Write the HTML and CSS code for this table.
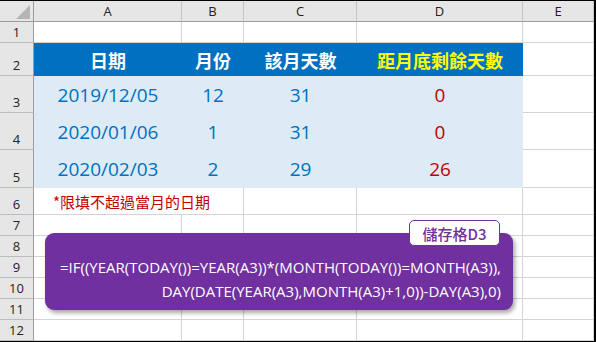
FILE: index.html
```html
<!DOCTYPE html>
<html lang="zh-Hant">
<head>
<meta charset="utf-8">
<title>距月底剩餘天數</title>
<link rel="stylesheet" href="styles.css">
</head>
<body>
<div class="sheet">
  <div class="corner"><span class="tri"></span></div>
  <div class="ch">A</div><div class="ch">B</div><div class="ch">C</div><div class="ch">D</div><div class="ch">E</div>

  <div class="rh">1</div><div class="c"></div><div class="c"></div><div class="c"></div><div class="c"></div><div class="c"></div>

  <div class="tbl">
    <div class="th">日期</div><div class="th">月份</div><div class="th">該月天數</div><div class="th th-y">距月底剩餘天數</div>
    <div class="td">2019/12/05</div><div class="td">12</div><div class="td">31</div><div class="td td-r">0</div>
    <div class="td">2020/01/06</div><div class="td">1</div><div class="td">31</div><div class="td td-r">0</div>
    <div class="td">2020/02/03</div><div class="td">2</div><div class="td">29</div><div class="td td-r">26</div>
  </div>

  <div class="rh">2</div><div class="c"></div>
  <div class="rh">3</div><div class="c"></div>
  <div class="rh">4</div><div class="c"></div>
  <div class="rh">5</div><div class="c"></div>

  <div class="rh">6</div><div class="c note">*限填不超過當月的日期</div><div class="c"></div><div class="c"></div><div class="c"></div>

  <div class="rh">7</div><div class="c"></div><div class="c"></div><div class="c"></div><div class="c"></div><div class="c"></div>
  <div class="rh">8</div><div class="c"></div><div class="c"></div><div class="c"></div><div class="c"></div><div class="c"></div>
  <div class="rh">9</div><div class="c"></div><div class="c"></div><div class="c"></div><div class="c"></div><div class="c"></div>
  <div class="rh">10</div><div class="c"></div><div class="c"></div><div class="c"></div><div class="c"></div><div class="c"></div>
  <div class="rh">11</div><div class="c"></div><div class="c"></div><div class="c"></div><div class="c"></div><div class="c"></div>
  <div class="rh">12</div><div class="c"></div><div class="c"></div><div class="c"></div><div class="c"></div><div class="c"></div>

  <div class="formula">
    <div>=IF((YEAR(TODAY())=YEAR(A3))*(MONTH(TODAY())=MONTH(A3)),</div>
    <div>DAY(DATE(YEAR(A3),MONTH(A3)+1,0))-DAY(A3),0)</div>
  </div>
  <div class="badge">儲存格D3</div>
</div>
</body>
</html>
```

FILE: styles.css
```css
* { box-sizing: border-box; }
html, body { margin: 0; padding: 0; background: #ffffff; }

.sheet {
  position: relative;
  width: 596px;
  height: 342px;
  border-top: 1px solid #000;
  border-right: 2px solid #000;
  border-bottom: 1px solid #000;
  display: grid;
  grid-template-columns: 34px 148px 62px 113px 166px 1fr;
  grid-template-rows: 21px 21px 33px 37px 37px 38px 27px 21px 21px 21px 21px 21px 21px;
  font-family: "Open Sans", "Noto Sans CJK TC", sans-serif;
  overflow: hidden;
}

.corner {
  background: #e6e6e6;
  border-right: 1px solid #9c9c9c;
  border-bottom: 1px solid #9c9c9c;
  display: flex;
  justify-content: flex-end;
  align-items: flex-end;
  padding: 0 3px 2px 0;
}
.tri {
  width: 14px;
  height: 14px;
  background: #b5b5b5;
  clip-path: polygon(100% 0, 100% 100%, 0 100%);
}

.ch {
  background: #e6e6e6;
  border-right: 1px solid #c4c4c4;
  border-bottom: 1px solid #9c9c9c;
  display: flex;
  align-items: center;
  justify-content: center;
  font-size: 13px;
  color: #222;
}

.rh {
  background: #e6e6e6;
  border-right: 1px solid #9c9c9c;
  border-bottom: 1px solid #bcbcbc;
  display: flex;
  align-items: flex-end;
  justify-content: center;
  font-size: 13px;
  line-height: 17px;
  color: #222;
  padding-bottom: 1px;
}

.c {
  border-right: 1px solid #d4d4d4;
  border-bottom: 1px solid #d4d4d4;
}

.tbl {
  grid-column: 2 / 6;
  grid-row: 3 / 7;
  display: grid;
  grid-template-columns: 148px 62px 113px 166px;
  grid-template-rows: 33px 37px 37px 38px;
  background: #ddebf7;
}
.th {
  background: #0070c0;
  color: #ffffff;
  font-family: "Noto Sans CJK TC", sans-serif;
  font-weight: 700;
  font-size: 18px;
  display: flex;
  align-items: center;
  justify-content: center;
}
.th-y { color: #ffff00; }
.td {
  color: #0070c0;
  font-size: 19px;
  display: flex;
  align-items: center;
  justify-content: center;
}
.td-r { color: #c00000; }

.note {
  grid-column: span 2;
  color: #c00000;
  font-family: "Noto Sans CJK TC", sans-serif;
  font-size: 15px;
  display: flex;
  align-items: center;
  padding-left: 19px;
}

.formula {
  position: absolute;
  left: 45px;
  top: 232px;
  width: 468px;
  height: 77px;
  background: #7030a0;
  border-radius: 9px;
  box-shadow: 2px 3px 4px rgba(0, 0, 0, 0.35);
  color: #ffffff;
  font-size: 15px;
  line-height: 24px;
  text-align: right;
  padding: 22px 12px 0 0;
  white-space: nowrap;
}

.badge {
  position: absolute;
  left: 409px;
  top: 219px;
  width: 91px;
  height: 26px;
  background: #ffffff;
  border: 1px solid #7030a0;
  border-radius: 5px;
  color: #7030a0;
  font-family: "Noto Sans CJK TC", sans-serif;
  font-weight: 500;
  font-size: 15px;
  display: flex;
  align-items: center;
  justify-content: center;
}
```
